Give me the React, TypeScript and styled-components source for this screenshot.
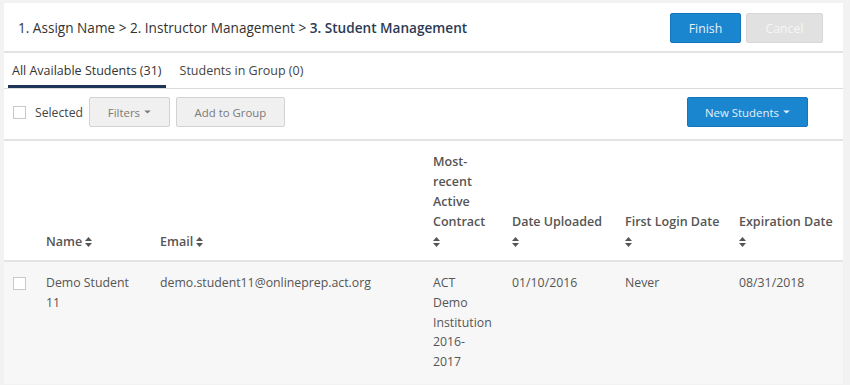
import React from "react";
import styled, { createGlobalStyle } from "styled-components";

const Global = createGlobalStyle`
  html, body { margin: 0; padding: 0; background: #f2f2f2; }
  body { font-family: "Open Sans", "Noto Sans", sans-serif; color: #444; }
`;

const Page = styled.div`
  padding: 3px 7px 0 4px;
`;

const Panel = styled.div`
  background: #fff;
  display: flex;
  flex-direction: column;
`;

const Header = styled.div`
  display: flex;
  align-items: center;
  justify-content: space-between;
  height: 48px;
  padding: 0 20px 0 14px;
  border-bottom: 2px solid #e3e3e3;
`;

const Crumbs = styled.div`
  font-size: 13.6px;
  color: #333;
`;

const Current = styled.span`
  font-weight: 600;
  color: #2b3a55;
`;

const HeaderButtons = styled.div`
  display: flex;
  gap: 5px;
  margin-top: 2px;
`;

const Button = styled.button<{ $variant: "primary" | "disabled" | "default"; $w: number; $fs?: number }>`
  height: 30px;
  width: ${(p) => p.$w}px;
  border-radius: 2px;
  font-family: "Open Sans", sans-serif;
  font-size: ${(p) => p.$fs ?? 12.3}px;
  padding: 0;
  display: inline-flex;
  align-items: center;
  justify-content: center;
  gap: 4px;
  cursor: pointer;
  ${(p) =>
    p.$variant === "primary"
      ? `background:#1a86d0;border:1px solid #1577bb;color:#e6f1fa;`
      : p.$variant === "disabled"
      ? `background:#e1e1e1;border:1px solid #d6d6d6;color:#f6f6f6;`
      : `background:#f0f0f0;border:1px solid #d2d2d2;color:#7a7a7a;`}
`;

const Tabs = styled.div`
  display: flex;
  height: 35px;
  padding-left: 4px;
  border-bottom: 1px solid #dcdcdc;
`;

const Tab = styled.div<{ $active?: boolean }>`
  font-size: 12.5px;
  color: ${(p) => (p.$active ? "#333" : "#444")};
  padding: 2px 4px 0 4px;
  margin-right: 10px;
  display: flex;
  align-items: center;
  box-sizing: border-box;
  border-bottom: 3px solid ${(p) => (p.$active ? "#1f3558" : "transparent")};
`;

const Toolbar = styled.div`
  display: flex;
  align-items: center;
  height: 52px;
  padding: 0 35px 4px 9px;
  border-bottom: 2px solid #e3e3e3;
  box-sizing: border-box;
`;

const Check = styled.span`
  display: inline-block;
  width: 11px;
  height: 11px;
  border: 1px solid #c9c9c9;
  background: #fff;
  flex: none;
`;

const SelLabel = styled.span`
  font-size: 12.2px;
  color: #444;
  margin: 0 6px 0 9px;
`;

const Spacer = styled.div`
  flex: 1;
`;

const Group = styled.div`
  display: flex;
  gap: 6px;
`;

const Table = styled.table`
  width: 100%;
  border-collapse: collapse;
  table-layout: fixed;
`;

const Th = styled.th`
  text-align: left;
  vertical-align: bottom;
  font-size: 12.5px;
  font-weight: 600;
  color: #555;
  line-height: 20px;
  padding: 11px 8px 8px 8px;
  border-bottom: 2px solid #e3e3e3;
`;

const Td = styled.td<{ $narrow?: boolean }>`
  vertical-align: top;
  font-size: 12.3px;
  color: #555;
  line-height: 19.8px;
  padding: 11px ${(p) => (p.$narrow ? 22 : 8)}px 12px 8px;
  background: #f7f7f7;
`;

const CheckTd = styled(Td)`
  padding: 14px 0 0 9px;
`;

const Caret = () => (
  <svg width="7" height="4" viewBox="0 0 8 5" style={{ marginLeft: 0 }}>
    <path d="M0 0.5 H8 L4 4.5 Z" fill="currentColor" />
  </svg>
);

const Sort = () => (
  <svg width="7" height="10" viewBox="0 0 7 10" style={{ marginLeft: 3, verticalAlign: "-1px" }}>
    <path d="M0 4 L3.5 0 L7 4 Z M0 6 L7 6 L3.5 10 Z" fill="#555" />
  </svg>
);

const SortBlock = styled.div`
  line-height: 20px;
  margin-left: -3px;
`;

export default function App() {
  return (
    <>
      <Global />
      <Page>
        <Panel>
          <Header>
            <Crumbs>
              1. Assign Name &gt; 2. Instructor Management &gt; <Current>3. Student Management</Current>
            </Crumbs>
            <HeaderButtons>
              <Button $variant="primary" $w={71}>Finish</Button>
              <Button $variant="disabled" $w={77}>Cancel</Button>
            </HeaderButtons>
          </Header>
          <Tabs>
            <Tab $active>All Available Students (31)</Tab>
            <Tab>Students in Group (0)</Tab>
          </Tabs>
          <Toolbar>
            <Check />
            <SelLabel>Selected</SelLabel>
            <Group>
              <Button $variant="default" $w={81} $fs={11.4}>
                Filters <Caret />
              </Button>
              <Button $variant="default" $w={109} $fs={11.4}>Add to Group</Button>
            </Group>
            <Spacer />
            <Button $variant="primary" $w={121} $fs={11.4}>
              New Students <Caret />
            </Button>
          </Toolbar>
          <Table>
            <colgroup>
              <col style={{ width: 34 }} />
              <col style={{ width: 114 }} />
              <col style={{ width: 273 }} />
              <col style={{ width: 79 }} />
              <col style={{ width: 113 }} />
              <col style={{ width: 114 }} />
              <col />
            </colgroup>
            <thead>
              <tr>
                <Th />
                <Th>
                  Name<Sort />
                </Th>
                <Th>
                  Email<Sort />
                </Th>
                <Th>
                  Most-recent Active Contract
                  <SortBlock><Sort /></SortBlock>
                </Th>
                <Th>
                  Date Uploaded
                  <SortBlock><Sort /></SortBlock>
                </Th>
                <Th>
                  First Login Date
                  <SortBlock><Sort /></SortBlock>
                </Th>
                <Th>
                  Expiration Date
                  <SortBlock><Sort /></SortBlock>
                </Th>
              </tr>
            </thead>
            <tbody>
              <tr>
                <CheckTd>
                  <Check />
                </CheckTd>
                <Td>Demo Student 11</Td>
                <Td>demo.student11@onlineprep.act.org</Td>
                <Td $narrow>ACT Demo Institution 2016-2017</Td>
                <Td>01/10/2016</Td>
                <Td>Never</Td>
                <Td>08/31/2018</Td>
              </tr>
            </tbody>
          </Table>
        </Panel>
      </Page>
    </>
  );
}
